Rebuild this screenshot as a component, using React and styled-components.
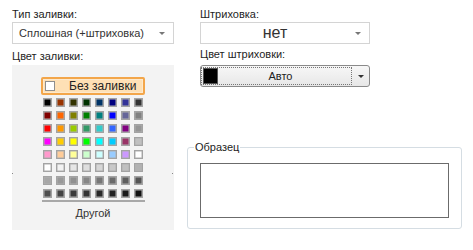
import React from 'react'
import styled, { createGlobalStyle } from 'styled-components'

const GlobalStyle = createGlobalStyle`
  body {
    margin: 0;
    background: #ffffff;
    font-family: "Liberation Sans", Arial, sans-serif;
    font-size: 11px;
    color: #1e1e1e;
  }
`

const palette = [
  ['#000000', '#993300', '#333300', '#003300', '#003366', '#000080', '#333399', '#333333'],
  ['#800000', '#ff6600', '#808000', '#008000', '#008080', '#0000ff', '#666699', '#808080'],
  ['#ff0000', '#ff9900', '#99cc00', '#339966', '#33cccc', '#3366ff', '#800080', '#969696'],
  ['#ff00ff', '#ffcc00', '#ffff00', '#00ff00', '#00ffff', '#00ccff', '#993366', '#c0c0c0'],
  ['#ff99cc', '#ffcc99', '#ffff99', '#ccffcc', '#ccffff', '#99ccff', '#cc99ff', '#ffffff'],
  ['#ffffff', '#f2f2f2', '#e6e6e6', '#dedede', '#d6d6d6', '#c8c8c8', '#c0c0c0', '#b2b2b2'],
  ['#a6a6a6', '#999999', '#909090', '#868686', '#777777', '#6b6b6b', '#5f5f5f', '#555555'],
  ['#4d4d4d', '#444444', '#3b3b3b', '#333333', '#292929', '#202020', '#1a1a1a', '#111111'],
]

const Page = styled.div`
  width: 473px;
  height: 250px;
  display: grid;
  grid-template-columns: 162px 275px;
  column-gap: 13px;
  align-items: start;
  padding: 7px 0 0 12px;
  box-sizing: border-box;
`

const Column = styled.div`
  display: flex;
  flex-direction: column;
`

const RightTop = styled.div`
  display: flex;
  flex-direction: column;
  padding-left: 13px;
  width: 170px;
`

const Label = styled.div`
  line-height: 15px;
  height: 15px;
  margin-top: ${p => p.$top || 0}px;
`

const Select = styled.div`
  height: 22px;
  box-sizing: border-box;
  border: 1px solid #d4d4d4;
  background: #fff;
  display: flex;
  align-items: center;
  padding: 0 8px 0 6px;
  color: #333;
  font-size: ${p => p.$big ? '16px' : '11px'};
`

const SelectText = styled.span`
  flex: 1;
  text-align: ${p => p.$center ? 'center' : 'left'};
  padding-right: ${p => p.$center ? '12px' : 0};
`

const Arrow = styled.span`
  width: 0;
  height: 0;
  border-left: 3px solid transparent;
  border-right: 3px solid transparent;
  border-top: 3px solid ${p => p.$dark ? '#333' : '#777'};
`

const Panel = styled.div`
  position: relative;
  margin-top: 1px;
  height: 165px;
  background: #f3f3f3;
  display: flex;
  flex-direction: column;
  align-items: center;
  padding-top: 12px;
  box-sizing: border-box;
  &::before, &::after {
    content: '';
    position: absolute;
    top: 108px;
    width: 1px;
    height: 1px;
    background: #888;
  }
  &::before { left: 0; }
  &::after { right: 1px; }
`

const NoFill = styled.div`
  width: 104px;
  height: 18px;
  box-sizing: border-box;
  border: 2px solid #f3a64a;
  border-radius: 2px;
  background: #fee0b5;
  display: flex;
  align-items: center;
  padding-left: 2px;
  font-size: 12px;
  color: #222;
  box-shadow: inset 0 0 0 1px #fde9cc;
`

const Check = styled.span`
  width: 10px;
  height: 10px;
  box-sizing: border-box;
  border: 1px solid #8e8e8e;
  background: #fff;
  margin-right: 14px;
`

const Swatches = styled.div`
  display: grid;
  grid-template-columns: repeat(8, 9px);
  grid-auto-rows: 9px;
  gap: 4px;
  margin-top: 3px;
`

const Swatch = styled.span`
  box-sizing: border-box;
  border: 1px solid #a3a3a3;
  box-shadow: inset 0 0 0 0.5px #b0b0b0;
  background: ${p => p.$c};
`

const Divider = styled.div`
  width: 103px;
  height: 2px;
  background: #a8a8a8;
  margin-top: 2px;
`

const Other = styled.div`
  margin-top: 4px;
  font-size: 11px;
  line-height: 15px;
  color: #333;
`

const ColorButton = styled.div`
  height: 22px;
  margin-top: 3px;
  box-sizing: border-box;
  border: 1px solid #8a8a8a;
  border-radius: 3px;
  background: linear-gradient(#f7f7f7, #e7e7e7);
  display: flex;
`

const ColorMain = styled.div`
  flex: 1;
  margin: 1px 0;
  border: 1px dotted #777;
  display: flex;
  align-items: center;
  padding-left: 1px;
`

const ColorChip = styled.span`
  width: 15px;
  height: 16px;
  background: #000;
  border: 1px solid #555;
  box-sizing: border-box;
`

const ColorText = styled.span`
  flex: 1;
  text-align: center;
  font-size: 11px;
  color: #222;
  padding-right: 8px;
`

const ColorArrow = styled.div`
  width: 17px;
  display: flex;
  align-items: center;
  justify-content: center;
`

const Fieldset = styled.fieldset`
  margin: 54px 0 0 0;
  padding: 0 12px 10px 12px;
  height: 88px;
  box-sizing: border-box;
  border: 1px solid #d5dde3;
  border-radius: 3px;
  legend {
    padding: 0 1px;
    margin-left: -6px;
    font-size: 11px;
    line-height: 12px;
    color: #1e1e1e;
  }
`

const Sample = styled.div`
  margin-top: 10px;
  height: 55px;
  border: 1px solid #6b6b6b;
  background: #fff;
  box-sizing: border-box;
`

export default function App() {
  return (
    <>
      <GlobalStyle />
      <Page>
        <Column>
          <Label>Тип заливки:</Label>
          <Select>
            <SelectText>Сплошная (+штриховка)</SelectText>
            <Arrow />
          </Select>
          <Label $top={5}>Цвет заливки:</Label>
          <Panel>
            <NoFill>
              <Check />
              Без заливки
            </NoFill>
            <Swatches>
              {palette.flat().map((c, i) => <Swatch key={i} $c={c} />)}
            </Swatches>
            <Divider />
            <Other>Другой</Other>
          </Panel>
        </Column>
        <Column>
          <RightTop>
            <Label>Штриховка:</Label>
            <Select $big>
              <SelectText $center>нет</SelectText>
              <Arrow />
            </Select>
            <Label $top={3}>Цвет штриховки:</Label>
            <ColorButton>
              <ColorMain>
                <ColorChip />
                <ColorText>Авто</ColorText>
              </ColorMain>
              <ColorArrow><Arrow $dark /></ColorArrow>
            </ColorButton>
          </RightTop>
          <Fieldset>
            <legend>Образец</legend>
            <Sample />
          </Fieldset>
        </Column>
      </Page>
    </>
  )
}
